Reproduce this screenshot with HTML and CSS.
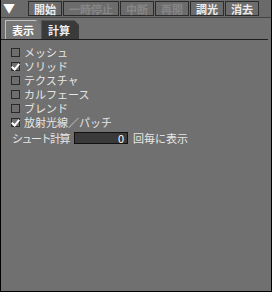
FILE: index.html
```html
<!DOCTYPE html>
<html lang="ja">
<head>
<meta charset="utf-8">
<link rel="stylesheet" href="styles.css">
</head>
<body>
<div class="frame">
  <div class="toolbar">
    <span class="collapse">▼</span>
    <div class="buttons">
      <span class="btn">開始</span>
      <span class="btn off">一時停止</span>
      <span class="btn off">中断</span>
      <span class="btn off">再開</span>
      <span class="btn">調光</span>
      <span class="btn">消去</span>
    </div>
  </div>
  <div class="tabs">
    <span class="tab active">表示</span>
    <span class="tab">計算</span>
  </div>
  <div class="page">
    <label class="row"><span class="box"></span>メッシュ</label>
    <label class="row"><span class="box checked"></span>ソリッド</label>
    <label class="row"><span class="box"></span>テクスチャ</label>
    <label class="row"><span class="box"></span>カルフェース</label>
    <label class="row"><span class="box"></span>ブレンド</label>
    <label class="row"><span class="box checked"></span>放射光線／パッチ</label>
    <div class="row shoot">
      <span class="shoot-label">シュート計算</span>
      <span class="field">0</span>
      <span>回毎に表示</span>
    </div>
  </div>
</div>
</body>
</html>
```
FILE: styles.css
```css
html, body {
  margin: 0;
  padding: 0;
  background: #000;
}
body {
  font-family: "Noto Sans CJK JP", "DejaVu Sans", sans-serif;
  font-size: 11px;
  color: #e6e6e6;
}
.frame {
  width: 270px;
  height: 291px;
  background: #707070;
  border-left: 1px solid #000;
  border-right: 1px solid #000;
  border-bottom: 1px solid #000;
  display: flex;
  flex-direction: column;
}
.toolbar {
  height: 17px;
  display: flex;
  align-items: flex-start;
  background: #6a6a6a;
  border-bottom: 1px solid #444;
}
.collapse {
  width: 27px;
  line-height: 16px;
  font-size: 12px;
  color: #fff;
  padding-left: 2px;
  box-sizing: border-box;
}
.buttons {
  display: flex;
  padding-top: 1px;
}
.btn {
  height: 15px;
  line-height: 14px;
  padding: 0 5px;
  box-sizing: border-box;
  border: 1px solid #2c2c2c;
  background: #6c6c6c;
  color: #ececec;
  margin-right: 1px;
  font-weight: bold;
}
.btn.off {
  color: #868686;
}
.tabs {
  display: flex;
  padding: 2px 0 0 4px;
  height: 19px;
}
.tab {
  width: 36px;
  height: 19px;
  box-sizing: border-box;
  line-height: 18px;
  padding-left: 6px;
  background: #3a3a3a;
  color: #f0f0f0;
  border-top: 1px solid #555;
  border-left: 1px solid #555;
  clip-path: polygon(0 0, calc(100% - 5px) 0, 100% 5px, 100% 100%, 0 100%);
  font-weight: bold;
}
.tab + .tab {
  width: 38px;
}
.tab.active {
  background: #767676;
  border-top-color: #c0c0c0;
  border-left-color: #c0c0c0;
  color: #fff;
}
.page {
  flex: 1;
  border-top: 1px solid #1e1e1e;
  margin-right: 3px;
  padding: 5px 0 0 10px;
  display: flex;
  flex-direction: column;
}
.row {
  display: flex;
  align-items: center;
  height: 14px;
  line-height: 14px;
  gap: 4px;
}
.box {
  width: 9px;
  height: 9px;
  box-sizing: border-box;
  border: 1px solid #2a2a2a;
  background: #6e6e6e;
  position: relative;
}
.box.checked::after {
  content: "";
  position: absolute;
  left: 1px;
  top: -1px;
  width: 3px;
  height: 6px;
  border-right: 2px solid #fff;
  border-bottom: 2px solid #fff;
  transform: rotate(40deg);
}
.shoot {
  margin-left: 1px;
  margin-top: 2px;
  gap: 5px;
}
.shoot-label {
  width: 57px;
  letter-spacing: -1.5px;
  white-space: nowrap;
}
.field {
  width: 54px;
  height: 12px;
  box-sizing: border-box;
  background: #3a3a3a;
  border: 1px solid #111;
  text-align: right;
  padding-right: 3px;
  line-height: 10px;
  color: #fff;
}
```
